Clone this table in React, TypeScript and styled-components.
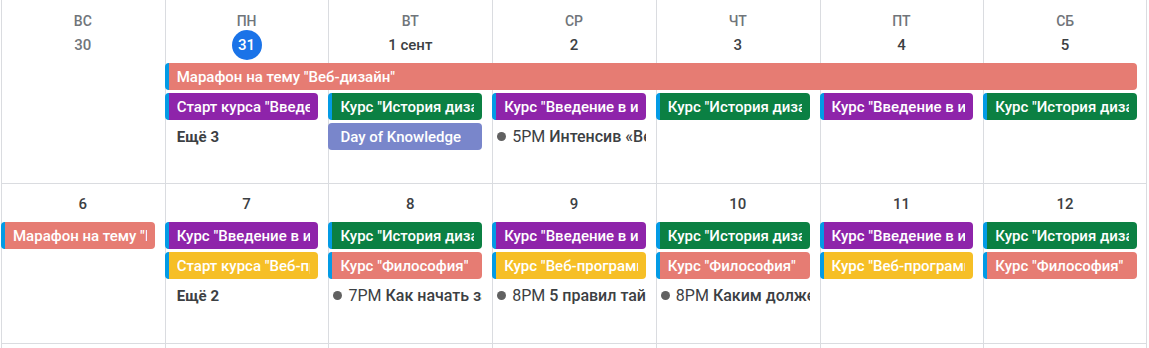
import styled, { createGlobalStyle } from 'styled-components';

const GlobalStyle = createGlobalStyle`
	body {
		margin: 0;
		background: #fff;
		font-family: Roboto, "Noto Sans", Arial, sans-serif;
		color: #3c4043;
	}
`

const Month = styled.div`
	padding: 0 2px 0 1px;
`

const Week = styled.div<{ $height: number }>`
	display: grid;
	grid-template-columns: repeat(7, 1fr);
	grid-template-rows: auto repeat(3, 27px) 1fr;
	row-gap: 3px;
	height: ${p => p.$height}px;
	box-sizing: border-box;
	border-bottom: 1px solid #dadce0;
`

const DayCell = styled.div<{ $col: number }>`
	grid-column: ${p => p.$col};
	grid-row: 1 / -1;
	border-left: 1px solid #dadce0;
	${p => p.$col === 7 && 'border-right: 1px solid #dadce0;'}
`

const DayHeader = styled.div<{ $col: number; $first?: boolean }>`
	grid-column: ${p => p.$col};
	grid-row: 1;
	display: flex;
	flex-direction: column;
	align-items: center;
	padding-top: ${p => (p.$first ? 12 : 5)}px;
`

const DayName = styled.div`
	font-size: 14px;
	line-height: 18px;
	font-weight: 500;
	color: #70757a;
`

const DateNum = styled.div<{ $today?: boolean; $past?: boolean }>`
	min-width: 30px;
	height: 30px;
	padding: 0 4px;
	box-sizing: border-box;
	border-radius: 15px;
	display: flex;
	align-items: center;
	justify-content: center;
	font-size: 15px;
	font-weight: 500;
	color: ${p => (p.$today ? '#fff' : p.$past ? '#70757a' : '#3c4043')};
	background: ${p => (p.$today ? '#1a73e8' : 'transparent')};
`

const Event = styled.div<{ $col: number; $span?: number; $row: number; $bg: string; $stripe?: boolean }>`
	grid-column: ${p => p.$col} / span ${p => p.$span || 1};
	grid-row: ${p => p.$row};
	margin-right: 10px;
	min-width: 0;
	box-sizing: border-box;
	display: flex;
	align-items: center;
	background: ${p => p.$bg};
	border-radius: 4px;
	border-left: ${p => (p.$stripe ? '4px solid #039be5' : 'none')};
	padding: 0 8px 0 ${p => (p.$stripe ? 8 : 12)}px;
	color: #fff;
	font-size: 15px;
	font-weight: 500;
`

const Title = styled.span`
	overflow: hidden;
	white-space: nowrap;
`

const More = styled.div<{ $col: number; $row: number }>`
	grid-column: ${p => p.$col};
	grid-row: ${p => p.$row};
	display: flex;
	align-items: center;
	padding-left: 12px;
	font-size: 15px;
	font-weight: 700;
	color: #3c4043;
`

const Timed = styled.div<{ $col: number; $row: number }>`
	grid-column: ${p => p.$col};
	grid-row: ${p => p.$row};
	margin-right: 10px;
	min-width: 0;
	display: flex;
	align-items: center;
	padding-left: 5px;
	font-size: 16px;
	color: #3c4043;
	overflow: hidden;
	white-space: nowrap;
`

const Dot = styled.span`
	flex: none;
	width: 9px;
	height: 9px;
	border-radius: 50%;
	background: #616161;
	margin-right: 6px;
`

const Time = styled.span`
	margin-right: 4px;
`

const TimedTitle = styled.span`
	font-weight: 500;
`

const COLORS = {
	coral: '#e67c73',
	grape: '#8e24aa',
	basil: '#0b8043',
	banana: '#f6bf26',
	lavender: '#7986cb',
}

type Ev = { col: number; row: number; span?: number; color: string; title: string; stripe?: boolean }
type TimedEv = { col: number; row: number; time: string; title: string }
type Day = { name?: string; date: string; today?: boolean; past?: boolean }

interface WeekData {
	height: number;
	first?: boolean;
	days: Day[];
	events: Ev[];
	timed: TimedEv[];
	more: { col: number; row: number; count: number }[];
}

const INTRO = 'Курс "Введение в интерфейсы"';
const HISTORY = 'Курс "История дизайна"';
const PHILO = 'Курс "Философия"';
const WEBPROG = 'Курс "Веб-программирование"';
const MARATHON = 'Марафон на тему "Веб-дизайн"';

const weeks: WeekData[] = [
	{
		height: 184,
		first: true,
		days: [
			{ name: 'ВС', date: '30', past: true },
			{ name: 'ПН', date: '31', today: true },
			{ name: 'ВТ', date: '1 сент' },
			{ name: 'СР', date: '2' },
			{ name: 'ЧТ', date: '3' },
			{ name: 'ПТ', date: '4' },
			{ name: 'СБ', date: '5' },
		],
		events: [
			{ col: 2, span: 6, row: 2, color: COLORS.coral, title: MARATHON, stripe: true },
			{ col: 2, row: 3, color: COLORS.grape, title: 'Старт курса "Введение в интерфейсы"', stripe: true },
			{ col: 3, row: 3, color: COLORS.basil, title: HISTORY, stripe: true },
			{ col: 4, row: 3, color: COLORS.grape, title: INTRO, stripe: true },
			{ col: 5, row: 3, color: COLORS.basil, title: HISTORY, stripe: true },
			{ col: 6, row: 3, color: COLORS.grape, title: INTRO, stripe: true },
			{ col: 7, row: 3, color: COLORS.basil, title: HISTORY, stripe: true },
			{ col: 3, row: 4, color: COLORS.lavender, title: 'Day of Knowledge' },
		],
		timed: [{ col: 4, row: 4, time: '5PM', title: 'Интенсив «Веб-дизайн»' }],
		more: [{ col: 2, row: 4, count: 3 }],
	},
	{
		height: 160,
		days: [
			{ date: '6' },
			{ date: '7' },
			{ date: '8' },
			{ date: '9' },
			{ date: '10' },
			{ date: '11' },
			{ date: '12' },
		],
		events: [
			{ col: 1, row: 2, color: COLORS.coral, title: MARATHON, stripe: true },
			{ col: 2, row: 2, color: COLORS.grape, title: INTRO, stripe: true },
			{ col: 2, row: 3, color: COLORS.banana, title: 'Старт курса "Веб-программирование"', stripe: true },
			{ col: 3, row: 2, color: COLORS.basil, title: HISTORY, stripe: true },
			{ col: 3, row: 3, color: COLORS.coral, title: PHILO, stripe: true },
			{ col: 4, row: 2, color: COLORS.grape, title: INTRO, stripe: true },
			{ col: 4, row: 3, color: COLORS.banana, title: WEBPROG, stripe: true },
			{ col: 5, row: 2, color: COLORS.basil, title: HISTORY, stripe: true },
			{ col: 5, row: 3, color: COLORS.coral, title: PHILO, stripe: true },
			{ col: 6, row: 2, color: COLORS.grape, title: INTRO, stripe: true },
			{ col: 6, row: 3, color: COLORS.banana, title: WEBPROG, stripe: true },
			{ col: 7, row: 2, color: COLORS.basil, title: HISTORY, stripe: true },
			{ col: 7, row: 3, color: COLORS.coral, title: PHILO, stripe: true },
		],
		timed: [
			{ col: 3, row: 4, time: '7PM', title: 'Как начать заниматься дизайном' },
			{ col: 4, row: 4, time: '8PM', title: '5 правил тайпографики' },
			{ col: 5, row: 4, time: '8PM', title: 'Каким должен быть дизайнер' },
		],
		more: [{ col: 2, row: 4, count: 2 }],
	},
	{
		height: 160,
		days: [
			{ date: '13' },
			{ date: '14' },
			{ date: '15' },
			{ date: '16' },
			{ date: '17' },
			{ date: '18' },
			{ date: '19' },
		],
		events: [],
		timed: [],
		more: [],
	},
];

export default function App() {
	return (
		<>
			<GlobalStyle />
			<Month>
				{weeks.map((w, wi) => (
					<Week key={wi} $height={w.height}>
						{w.days.map((_, i) => (
							<DayCell key={'c' + i} $col={i + 1} />
						))}
						{w.days.map((d, i) => (
							<DayHeader key={'h' + i} $col={i + 1} $first={w.first}>
								{d.name && <DayName>{d.name}</DayName>}
								<DateNum $today={d.today} $past={d.past}>{d.date}</DateNum>
							</DayHeader>
						))}
						{w.events.map((e, i) => (
							<Event key={'e' + i} $col={e.col} $span={e.span} $row={e.row} $bg={e.color} $stripe={e.stripe}>
								<Title>{e.title}</Title>
							</Event>
						))}
						{w.timed.map((t, i) => (
							<Timed key={'t' + i} $col={t.col} $row={t.row}>
								<Dot />
								<Time>{t.time}</Time>
								<TimedTitle>{t.title}</TimedTitle>
							</Timed>
						))}
						{w.more.map((m, i) => (
							<More key={'m' + i} $col={m.col} $row={m.row}>
								Ещё {m.count}
							</More>
						))}
					</Week>
				))}
			</Month>
		</>
	);
}
